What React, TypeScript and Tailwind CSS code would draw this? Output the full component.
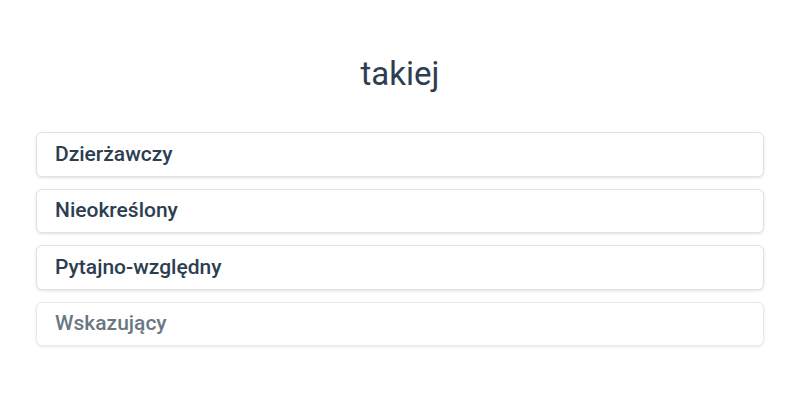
import React from 'react';

const options = ['Dzierżawczy', 'Nieokreślony', 'Pytajno-względny', 'Wskazujący'];

const App: React.FC = () => {
    return (
        <div className="w-[800px] h-[400px] bg-white text-[#2c3e50] font-['Roboto',sans-serif] px-9 pt-[52px]">
            <h1 className="text-center text-[33px] leading-[44px] font-normal">takiej</h1>
            <ul className="flex flex-col gap-3 mt-[36px]">
                {options.map((option, i) => (
                    <li key={option}
                        className={`h-[44.5px] flex items-center px-[18px] bg-white border border-[#e2e2e2] rounded-md shadow-[0_1px_3px_rgba(0,0,0,0.12)] text-[21px] font-medium ${i === 3 ? 'opacity-70' : ''}`}>
                        {option}
                    </li>
                ))}
            </ul>
        </div>
    );
}

export default App;
